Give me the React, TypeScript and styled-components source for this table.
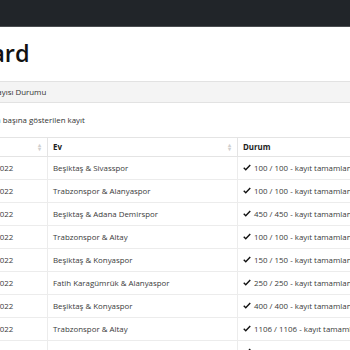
import styled, { createGlobalStyle } from "styled-components";

const GlobalStyle = createGlobalStyle`
  html, body {
    margin: 0;
    padding: 0;
    background: #fff;
    overflow: hidden;
  }
  body {
    font-family: "Open Sans", "Noto Sans", sans-serif;
    color: #212529;
  }
`;

const Navbar = styled.div`
  height: 26px;
  background: #212529;
  border-bottom: 1px solid #4a4d50;
`;

const Page = styled.div`
  margin-left: -39px;
  width: 600px;
`;

const Title = styled.h1`
  margin: 10px 0 0 -56px;
  height: 44px;
  font-size: 23.5px;
  font-weight: 600;
  line-height: 32px;
  color: #111;
  white-space: nowrap;
`;

const Card = styled.div`
  border-top: 1px solid #e2e2e2;
`;

const CardHeader = styled.div`
  height: 20px;
  padding-left: 12px;
  display: flex;
  align-items: center;
  background: #f4f4f4;
  border-bottom: 1px solid #e2e2e2;
  font-size: 7.9px;
  color: #333;
  white-space: nowrap;
`;

const CardBody = styled.div`
  padding: 12px 0 0 12px;
`;

const LengthRow = styled.div`
  height: 22px;
  padding-left: 8px;
  display: flex;
  align-items: flex-start;
  font-size: 7.9px;
  color: #333;
  white-space: nowrap;
`;

const Table = styled.table`
  margin-left: -5px;
  border-collapse: collapse;
  table-layout: fixed;
  font-size: 7.9px;
  color: #3a3a3a;
  width: 540px;
`;

const Th = styled.th<{ $w: number }>`
  width: ${(p) => p.$w}px;
  height: 18px;
  padding: 0 5px;
  text-align: left;
  font-weight: 700;
  color: #222;
  border-top: 1px solid #e4e4e4;
  border-bottom: 1px solid #e4e4e4;
  border-right: 1px solid #e4e4e4;
  position: relative;
`;

const SortIcon = styled.span`
  position: absolute;
  right: 6px;
  top: 5px;
  font-size: 6px;
  line-height: 4px;
  color: #cfcfcf;
  display: flex;
  flex-direction: column;
`;

const Td = styled.td`
  height: 22px;
  padding: 0 5px;
  border-bottom: 1px solid #ececec;
  border-right: 1px solid #ececec;
  white-space: nowrap;
  overflow: hidden;
`;

const Status = styled.span`
  display: inline-flex;
  align-items: center;
  gap: 3px;
`;

const Check = () => (
  <svg width="8" height="7" viewBox="0 0 16 14">
    <path d="M1.5 7.5 L5.5 11.5 L14.5 2" fill="none" stroke="#111" strokeWidth="2.8" />
  </svg>
);

const rows = [
  ["15.01.2022", "Beşiktaş & Sivasspor", 100],
  ["16.01.2022", "Trabzonspor & Alanyaspor", 100],
  ["22.01.2022", "Beşiktaş & Adana Demirspor", 450],
  ["23.01.2022", "Trabzonspor & Altay", 100],
  ["05.02.2022", "Beşiktaş & Konyaspor", 150],
  ["06.02.2022", "Fatih Karagümrük & Alanyaspor", 250],
  ["12.02.2022", "Beşiktaş & Konyaspor", 400],
  ["13.02.2022", "Trabzonspor & Altay", 1106],
  ["19.02.2022", "Beşiktaş & Fenerbahçe", 110],
] as const;

export default function App() {
  return (
    <>
      <GlobalStyle />
      <Navbar />
      <Page>
        <Title>Dashboard</Title>
        <Card>
          <CardHeader>Kayıt Sayısı Durumu</CardHeader>
          <CardBody>
            <LengthRow>Sayfa başına gösterilen kayıt</LengthRow>
            <Table>
              <thead>
                <tr>
                  <Th $w={69}>
                    Tarih
                    <SortIcon>
                      <span>▴</span>
                      <span>▾</span>
                    </SortIcon>
                  </Th>
                  <Th $w={179}>
                    Ev
                    <SortIcon>
                      <span>▴</span>
                      <span>▾</span>
                    </SortIcon>
                  </Th>
                  <Th $w={262}>Durum</Th>
                </tr>
              </thead>
              <tbody>
                {rows.map(([date, match, n], i) => (
                  <tr key={i}>
                    <Td>{date}</Td>
                    <Td>{match}</Td>
                    <Td>
                      <Status>
                        <Check />
                        {n} / {n} - kayıt tamamlandı.
                      </Status>
                    </Td>
                  </tr>
                ))}
              </tbody>
            </Table>
          </CardBody>
        </Card>
      </Page>
    </>
  );
}
